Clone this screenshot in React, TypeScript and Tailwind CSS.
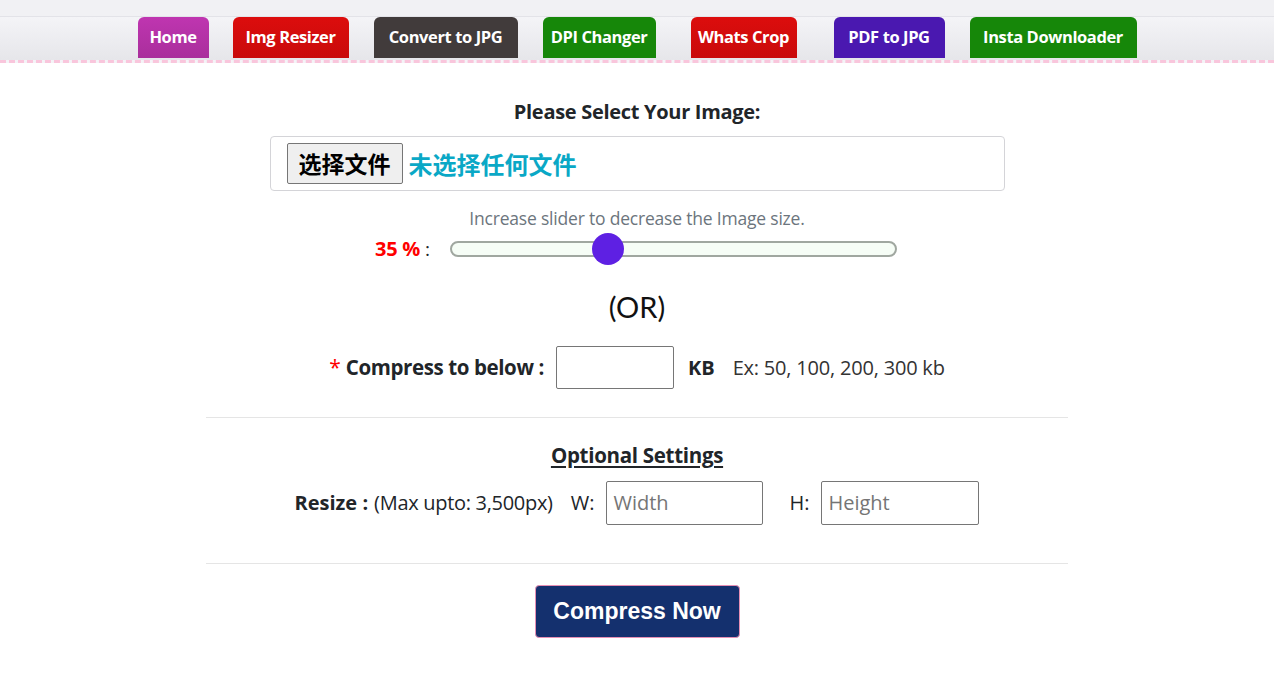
import React from 'react';

const tabs = [
  { label: 'Home', bg: 'bg-[linear-gradient(#bf35b0,#a92f9c)]', w: 'w-[71px]', ml: 'ml-0' },
  { label: 'Img Resizer', bg: 'bg-[linear-gradient(#dc0d0d,#c90b0b)]', w: 'w-[116px]', ml: 'ml-[24px]' },
  { label: 'Convert to JPG', bg: 'bg-[#413b3b]', w: 'w-[144px]', ml: 'ml-[25px]' },
  { label: 'DPI Changer', bg: 'bg-[#168709]', w: 'w-[113px]', ml: 'ml-[25px]' },
  { label: 'Whats Crop', bg: 'bg-[linear-gradient(#dc0d0d,#c90b0b)]', w: 'w-[106px]', ml: 'ml-[35px]' },
  { label: 'PDF to JPG', bg: 'bg-[#4a18b0]', w: 'w-[111px]', ml: 'ml-[37px]' },
  { label: 'Insta Downloader', bg: 'bg-[#168709]', w: 'w-[167px]', ml: 'ml-[25px]' },
];

function App() {
  return (
    <div className="min-h-[687px] bg-white text-[#212529] font-['Open_Sans','Noto_Sans_CJK_SC',sans-serif]">
      <div className="h-[17px] bg-[#f1f1f4] border-b border-[#e3e3e8]"></div>
      <nav className="h-[46px] bg-[linear-gradient(#f4f4f7,#e6e6ea)] flex items-start justify-center border-b-[3px] border-dashed border-[#f9c6dc]">
        {tabs.map((t) => (
          <a
            key={t.label}
            className={`${t.bg} ${t.w} ${t.ml} h-[41px] rounded-t-[6px] text-white font-bold text-[16.5px] tracking-[-0.4px] flex items-center justify-center`}
          >
            {t.label}
          </a>
        ))}
      </nav>

      <main className="w-[862px] mx-auto flex flex-col items-center">
        <h2 className="mt-[35px] text-[20px] font-bold leading-[28px] tracking-[-0.3px]">Please Select Your Image:</h2>

        <div className="mt-[10px] w-[735px] h-[55px] border border-[#d4d4d8] rounded-[4px] flex items-center px-[16px] gap-[6px]">
          <button className="h-[41px] px-[11px] bg-[#efefef] border border-[#767676] rounded-[2px] text-[23px] font-['Noto_Sans_CJK_SC',sans-serif] font-bold text-black leading-none">
            选择文件
          </button>
          <span className="text-[24px] font-bold text-[#0aa8c6] font-['Noto_Sans_CJK_SC',sans-serif]">未选择任何文件</span>
        </div>

        <p className="mt-[15px] text-[17.5px] text-[#6c757d] leading-[24px] tracking-[-0.2px]">Increase slider to decrease the Image size.</p>

        <div className="mt-[4px] flex items-center pr-[2px]">
          <span className="text-[20px] font-bold text-[#ff0000] tracking-[-0.3px]">35 %</span>
          <span className="ml-[5px] text-[19px]">:</span>
          <div className="ml-[20px] relative w-[447px] h-[16px] bg-[#f6fdf6] border-2 border-[#a0a7a0] rounded-full">
            <div className="absolute left-[140px] top-1/2 -translate-y-1/2 w-[32px] h-[32px] rounded-full bg-[#5e20e3]"></div>
          </div>
        </div>

        <p className="mt-[25px] text-[29px] leading-[36px] text-[#111] font-['Lato',sans-serif]">(OR)</p>

        <div className="mt-[21px] flex items-center">
          <span className="text-[21px] text-[#ff0000] mr-[5px]">*</span>
          <span className="text-[20.5px] font-bold tracking-[-0.4px]">Compress to below :</span>
          <input className="ml-[12px] w-[118px] h-[43px] border border-[#767676] rounded-[2px] outline-none" />
          <span className="ml-[14px] text-[20px] font-bold">KB</span>
          <span className="ml-[18px] text-[20px] text-[#333] tracking-[-0.2px]">Ex: 50, 100, 200, 300 kb</span>
        </div>

        <hr className="mt-[28px] w-full border-t border-[#e5e5e5]" />

        <h3 className="mt-[22px] text-[20.5px] font-bold underline underline-offset-[3px] tracking-[-0.3px]">Optional Settings</h3>

        <div className="mt-[10px] flex items-center">
          <span className="text-[20px] font-bold tracking-[0px]">Resize :</span>
          <span className="ml-[6px] text-[20px] tracking-[-0.3px]">(Max upto: 3,500px)</span>
          <span className="ml-[18px] text-[20px]">W:</span>
          <input placeholder="Width" className="ml-[12px] w-[157px] h-[44px] border border-[#767676] rounded-[2px] px-[6px] text-[20px] placeholder:text-[#757575] outline-none" />
          <span className="ml-[26px] text-[20px]">H:</span>
          <input placeholder="Height" className="ml-[12px] w-[158px] h-[44px] border border-[#767676] rounded-[2px] px-[6px] text-[20px] placeholder:text-[#757575] outline-none" />
        </div>

        <hr className="mt-[38px] w-full border-t border-[#e5e5e5]" />

        <button className="mt-[21px] w-[205px] h-[53px] bg-[#14306e] border border-[#e78fb4] rounded-[4px] text-white text-[23px] font-bold font-['Liberation_Sans',Arial,sans-serif]">
          Compress Now
        </button>
      </main>
    </div>
  );
}

export default App;
